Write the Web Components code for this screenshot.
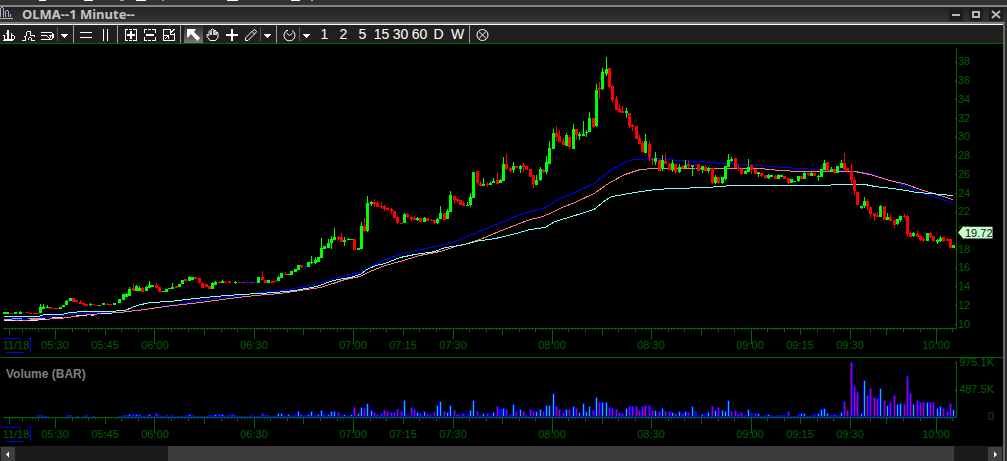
<!DOCTYPE html>
<html lang="en">
<head>
<meta charset="utf-8">
<title>OLMA--1 Minute--</title>
<style>
  html, body {
    height: 100%;
    margin: 0;
    background: #000;
  }
  body {
    --axis: #006400;
    --axis-text: #006000;
    font: 11px/14px "Liberation Sans", Arial, sans-serif;
    color: var(--axis-text);
  }
</style>
</head>
<body>
<chart-window>
  <title-bar slot="title">OLMA--1 Minute--</title-bar>
  <tool-bar slot="tools"></tool-bar>
  <price-pane></price-pane>
  <volume-pane>Volume (BAR)</volume-pane>
  <scroll-strip></scroll-strip>
</chart-window>

<script>
(function () {
  function define(name, html, setup) {
    const template = document.createElement('template');
    template.innerHTML = html;
    customElements.define(name, class extends HTMLElement {
      constructor() {
        super();
        this.attachShadow({ mode: 'open' });
        this.shadowRoot.appendChild(template.content.cloneNode(true));
        if (setup) setup(this.shadowRoot);
      }
    });
  }

  // ---------- window frame ----------

  define('chart-window', `
    <style>
      :host {
        display: flex;
        flex-direction: column;
        min-height: 100vh;
        background: #2b2b2b;
      }
      .strip {
        height: 5px;
        background: #333;
        border-bottom: 2px solid #858585;
      }
      .strip svg { display: block; }
      .frame {
        flex: 1;
        display: flex;
        flex-direction: column;
        margin-right: 2px;
        border-top: 2px solid #808080;
        border-right: 2px solid #686868;
        background: #000;
      }
    </style>
    <div class="strip">
      <svg width="320" height="2" shape-rendering="crispEdges" fill="#fff" aria-hidden="true">
        <path d="M39 0h7v1h-7zM84 0h9v1h-9zM136 0h10v1h-10zM227 0h11v1h-11zM291 0h9v1h-9z"/>
        <path fill="#c8a080" d="M120 0h4v1h-4zM162 0h2v1h-2zM311 0h2v1h-2z"/>
      </svg>
    </div>
    <slot name="title"></slot>
    <div class="frame">
      <slot name="tools"></slot>
      <slot></slot>
    </div>
  `);

  define('title-bar', `
    <style>
      :host {
        display: flex;
        align-items: center;
        height: 15px;
        padding-right: 4px;
        background: linear-gradient(#232323, #333);
        color: #c4c4c4;
        font: bold 13px/15px "Noto Sans", sans-serif;
      }
      .logo { width: 22px; height: 15px; }
      .name { flex: 1; white-space: nowrap; }
      .controls { display: flex; gap: 6px; }
      button {
        display: block;
        width: 14px;
        height: 13px;
        padding: 0;
        border: 0;
        border-radius: 2px;
        background: #1d1d1d;
      }
      button svg { display: block; }
    </style>
    <svg class="logo" viewBox="0 0 22 15" shape-rendering="crispEdges" fill="none" stroke="#aab4cc" aria-hidden="true">
      <path d="M0 11.5h13M.5 1v9M3.5 1v9M1 .5h2M5.5 4v6M8.5 4v6M6 3.5h2M10.5 7v3"/>
    </svg>
    <span class="name"><slot></slot></span>
    <div class="controls">
      <button aria-label="Minimize"><svg width="14" height="13" fill="#b8b8b8"><path d="M3 6h8v2H3z"/></svg></button>
      <button aria-label="Maximize"><svg width="14" height="13" fill="none" stroke="#b8b8b8" stroke-width="2"><path d="M4 4h6v5H4z"/></svg></button>
      <button aria-label="Close"><svg width="14" height="13" stroke="#b8b8b8" stroke-width="2"><path d="M3 3l8 7M11 3l-8 7"/></svg></button>
    </div>
  `);

  // ---------- toolbar ----------

  const ICONS = {
    bars: '<path d="M0 7.5h2M1.500 8v3M0 12.500h10M1 11.500h8M4.500 2v10M5.500 2v10M3 5.500h1M8.500 5v6M9 7.500h2M11.500 8v3M9 11.500h2"/>',
    steps: '<path d="M0 12.5h4M3.5 9v3M2 8.5h2M4.5 4v4M5 3.5h4M8.5 4v4M9 7.5h3M12.500 7v2M6.5 10v2M7 9.5h2M9.5 10v3M10 12.5h3"/>',
    study: '<path d="M0 4.5h11M0 7.5h6M0 11.5h7M6.500 8v1M7.500 9v1M8.500 10v1M8 7.500h3M11.500 5v6M12.500 6v4M7 11.500h4M9.500 8v2"/>',
    hlines: '<path d="M0 4.5h12M0 9.5h12"/>',
    vlines: '<path d="M4.5 1v12M8.5 1v12"/>',
    expand: '<path d="M4 1.5H1.5V12.5H4M9 1.5h3.5V12.5H9M5 1.5h3M5 12.5h3"/><path stroke-width="2" d="M3 7h8M7 3v8"/>',
    shrink: '<path d="M4 1.5H1.5V5M9 1.5h3.5V5M1.5 9v3.5H4M12.5 9v3.5H9M5 1.5h3M5 12.5h3"/><path stroke-width="2" d="M3 7h8"/>',
    fit: '<path d="M9 1.5H1.5V12.5H12.5V5M12.5 1l-4 4M8.5 2v4H12M3 11l3-3M2 7.5h4.5V11"/>',
    hand: '<path shape-rendering="auto" d="M4 12.5L1 8.5v-2l2 1V3.5l1-1 1 1V7V2l1.500-1L8 2v5V3l1-1 1 1v4V5l1-1 1 1v4.500L9.500 12.500z"/>',
    cross: '<path stroke-width="2" d="M1 7h12M7 1v12"/>',
    pencil: '<path shape-rendering="auto" d="M1.500 12.500V10L9 2.500l1.500-1 2 2-1 1.500L4 12.500zM8 3.500l2.500 2.500"/>',
    timer: '<path shape-rendering="auto" d="M4 2.500A5.500 5.500 0 1 0 9 2.500M6.500 7.500L3.500 5M6.500 7.500L9.500 5M3 2.500h2"/>',
    cancel: '<circle shape-rendering="auto" cx="6.500" cy="7" r="5.500"/><path shape-rendering="auto" d="M3 3.500l7 7M10 3.500l-7 7"/>'
  };

  const TOOLS = [
    'bars:Bar chart', 'steps:Line chart', 'study:Studies', '.', 'v:Chart menu', '|',
    'hlines:Horizontal grid', 'vlines:Vertical grid', '|',
    'expand:Expand', 'shrink:Compress', 'fit:Fit', '|',
    'arrow:Pointer', 'hand:Pan', 'cross:Crosshair', 'pencil:Draw', '.', 'v:Draw menu', '|',
    'timer:Interval', '.', 'v:Interval menu', ' ',
    '#1', '#2', '#5', '#15', '#30', '#60', '#D', '#W', '|', 'cancel:Clear'
  ];

  function toolHtml(tool) {
    if (tool === '|') return '<i class="rule"></i>';
    if (tool === '.') return '<i class="thin"></i>';
    if (tool === ' ') return '<i class="space"></i>';
    if (tool[0] === '#') return `<button class="period">${tool.slice(1)}</button>`;
    const [icon, label] = tool.split(':');
    if (icon === 'v') {
      return `<button class="menu" aria-label="${label}"><svg width="7" height="14"><path fill="#fff" d="M0 6h7v1H6v1H5v1H4v1H3V9H2V8H1V7H0z"/></svg></button>`;
    }
    if (icon === 'arrow') {
      return `<button class="on" aria-label="${label}"><svg width="13" height="14"><path fill="#fff" d="M0 1h9L7 4l6 6-2.500 3L4 6 1 9.500 0 9z"/></svg></button>`;
    }
    return `<button aria-label="${label}"><svg width="13" height="14" shape-rendering="crispEdges" fill="none" stroke="#fff">${ICONS[icon]}</svg></button>`;
  }

  define('tool-bar', `
    <style>
      :host {
        display: flex;
        height: 18px;
        border-top: 1px solid #fff;
        border-bottom: 1px solid var(--axis);
        background: #202020;
      }
      button {
        width: 19px;
        height: 18px;
        padding: 2px 0 0 3px;
        border: 0;
        background: none;
        color: #fff;
        text-align: left;
      }
      button svg { display: block; }
      .menu { width: 13px; }
      .on { background: linear-gradient(#2a2a2a, #777); }
      .period {
        display: flex;
        justify-content: center;
        padding: 0;
        font: 14px/18px "Liberation Sans Narrow", "Liberation Sans", sans-serif;
      }
      .rule { width: 1px; margin: 0 3px 0 2px; background: #a0a0a0; }
      .thin { width: 1px; margin: 2px 0; background: #555; }
      .space { width: 2px; }
    </style>
    ${TOOLS.map(toolHtml).join('')}
  `);

  // ---------- time axis, shared by both panes ----------

  const TIMES = [
    ['05:30', 55], ['05:45', 105], ['06:00', 155], ['06:30', 254], ['07:00', 353],
    ['07:15', 403], ['07:30', 453], ['08:00', 552], ['08:30', 651], ['09:00', 750],
    ['09:15', 800], ['09:30', 850], ['10:00', 936]
  ];

  function timeLabels() {
    let end = 32;
    let html = '<span class="day">11/18</span>';
    TIMES.forEach(([text, x]) => {
      html += `<i style="flex-grow:${x - 21 - end}"></i><span>${text}</span>`;
      end = x + 21;
    });
    return html;
  }

  function timeTicks() {
    let d = 'M3 .5H957M9.500 1v6';
    // the open at 09:30 falls on x = 850
    for (let m = -15; m <= 270; m++) {
      const x = m <= 240 ? Math.round(55 + m * 3.3125) : Math.round(850 + (m - 240) * 3.34);
      if (x > 953) break;
      let len = 1;
      if (m > -15 && m <= 240) {
        if (m % 5 === 0) len = 3;
        if (m % 15 === 0) len = 6;
        if (m % 30 === 0) len = 10;
        if (m > 0 && m % 60 === 30) len = 15;
      }
      d += `M${x + 0.5} 1v${len}`;
    }
    [[870, 3], [886, 6], [903, 3], [920, 3], [936, 15], [952, 3]].forEach(([x, len]) => {
      d += `M${x + 0.5} 1v${len}`;
    });
    return d;
  }

  define('time-axis', `
    <style>
      :host { display: grid; height: 29px; }
      svg, .labels { grid-area: 1 / 1; width: 100%; height: 29px; }
      svg { display: block; }
      .labels {
        display: flex;
        box-sizing: border-box;
        padding-top: 10px;
      }
      .labels > * { flex: 1 1 0; min-width: 0; }
      .labels span {
        flex-grow: 42;
        display: flex;
        justify-content: center;
        white-space: nowrap;
      }
      .labels .day { flex-grow: 32; }
    </style>
    <svg viewBox="0 0 957 29" preserveAspectRatio="none" shape-rendering="crispEdges" fill="none" aria-hidden="true">
      <path stroke="#006400" d="${timeTicks()}"/>
      <path stroke="#00f" d="M3 10.500H21M27 10.500H30.500V25M6 24.500H24"/>
    </svg>
    <div class="labels">${timeLabels()}</div>
  `);

  // ---------- price pane ----------

  // x, high, body top, body bottom, low; r falls, g rises, b is flat
  const CANDLES = `
    g 4 312 312 314 314,g 7 312 312 314 314,r 11 313 313 314 314,g 15 312 312 314 314,g 20 311 312 314 314,b 23 312 312 313 313,
    r 27 312 312 313 313,r 30 313 313 314 314,r 34 313 313 314 314,r 37 313 313 314 314,g 40 304 307 313 313,g 43 304 307 309 309,
    g 47 305 307 308 308,r 50 307 307 309 309,r 54 308 308 309 309,r 57 308 308 309 309,g 60 307 307 309 309,g 63 305 305 307 307,
    g 66 300 301 305 305,g 70 298 298 301 301,r 73 298 298 302 302,r 76 300 300 302 302,r 80 300 302 304 304,r 83 303 303 305 305,
    r 86 304 304 306 306,g 90 303 304 305 306,r 93 304 304 305 305,r 96 305 305 306 306,g 99 305 305 306 306,g 103 303 303 305 305,
    r 107 303 304 305 305,r 110 304 304 305 305,g 114 303 303 305 305,g 119 299 299 303 303,g 123 294 294 300 300,g 126 293 294 297 297,
    g 129 287 289 296 296,r 133 284 288 291 291,g 136 285 286 291 291,g 139 286 288 291 291,r 142 287 288 292 292,g 146 286 287 291 291,
    g 149 281 285 288 288,g 152 285 285 287 287,r 156 283 285 288 288,r 159 287 287 292 292,g 163 291 291 292 292,g 166 289 289 292 292,
    g 169 288 288 289 289,g 172 283 287 289 289,r 176 286 286 288 288,g 179 284 284 287 287,g 182 280 280 284 284,r 185 279 279 281 282,
    g 189 276 277 281 281,g 192 277 277 280 280,r 195 277 277 279 279,r 199 278 278 283 283,r 202 282 283 288 288,r 206 284 284 287 287,
    r 209 286 286 289 289,g 212 282 283 289 289,g 215 281 282 285 285,r 219 281 282 283 284,g 222 280 281 283 283,r 225 281 282 283 283,
    r 229 281 281 283 283,g 235 281 282 283 284,r 239 282 282 283 283,r 243 282 282 283 283,b 247 281 282 283 283,b 250 282 282 283 283,
    r 252 282 282 283 283,b 255 282 282 283 283,g 258 277 277 283 283,r 262 271 277 280 280,r 265 280 280 283 283,g 268 280 280 283 283,
    r 272 281 281 283 283,r 275 280 281 282 282,g 278 276 277 281 281,g 281 273 273 278 278,r 285 272 274 275 275,g 288 274 274 275 275,
    g 291 271 271 275 275,g 295 269 269 272 272,g 298 265 265 270 270,r 301 265 265 267 268,b 305 266 266 267 269,g 308 262 262 267 267,
    g 311 256 262 263 264,g 315 257 260 263 264,g 318 257 257 262 262,g 321 238 248 258 258,g 324 246 246 249 249,g 328 239 243 248 248,
    g 331 236 239 243 249,g 334 228 237 240 240,r 338 236 237 239 241,r 341 233 237 242 242,g 344 237 240 242 246,g 348 238 239 240 240,
    g 351 239 239 240 240,r 354 239 239 250 250,g 358 248 248 250 250,g 361 222 226 249 249,r 364 218 226 231 232,g 367 196 203 231 232,
    g 371 201 202 204 206,r 374 199 202 204 207,r 377 201 203 207 207,r 381 202 206 207 209,r 384 205 206 209 211,r 387 207 208 210 210,
    r 391 208 209 211 214,r 394 211 211 218 218,r 397 216 217 223 224,r 401 223 223 224 224,g 404 213 214 223 223,r 407 213 214 217 218,
    r 411 216 217 219 221,r 414 216 218 220 220,g 417 217 218 220 221,r 420 218 218 222 222,g 424 217 218 222 222,r 427 218 218 221 221,
    r 431 219 220 221 221,r 434 220 220 223 224,g 437 218 219 223 224,g 440 206 213 219 219,r 444 213 213 220 220,g 447 209 211 219 219,
    g 450 191 195 212 212,r 454 196 196 200 204,r 457 199 199 201 203,r 460 200 200 205 205,r 463 201 203 206 206,g 467 202 205 206 206,
    g 470 193 197 205 207,g 473 172 172 198 198,r 477 171 171 183 184,r 480 181 183 186 186,g 483 178 184 186 186,r 487 182 184 185 187,
    g 490 182 183 185 185,g 493 178 181 183 183,r 497 172 180 184 184,g 500 179 180 183 183,g 503 157 164 181 181,r 506 154 164 169 170,
    r 510 167 168 171 173,g 513 162 166 170 173,r 516 166 166 168 168,g 520 165 166 169 173,r 523 163 165 167 172,r 526 166 166 170 170,
    r 530 169 169 177 177,r 533 175 175 184 188,g 536 175 180 185 185,g 540 167 169 180 181,r 543 169 170 172 173,g 546 156 162 172 174,
    g 549 141 148 164 164,g 553 129 133 149 149,r 556 126 133 137 141,r 559 130 136 142 142,r 563 138 141 145 145,g 566 133 135 146 146,
    r 569 135 137 147 149,g 573 124 129 149 149,r 576 129 129 135 140,g 579 132 134 136 140,g 583 121 134 136 136,g 586 130 132 133 137,
    g 589 112 118 132 132,r 593 118 118 127 128,g 596 84 90 126 127,r 599 82 88 90 99,g 602 68 72 89 90,g 606 57 69 74 76,
    r 609 68 68 87 88,r 612 85 86 100 102,r 616 96 99 110 110,r 619 104 109 112 113,r 622 106 111 113 113,g 626 108 111 113 118,
    r 629 113 113 126 128,r 632 124 125 127 131,r 636 126 126 139 139,r 639 135 138 144 144,r 642 141 143 152 152,g 645 134 141 153 153,
    r 649 141 144 157 161,r 652 157 159 160 165,g 655 152 158 162 165,r 659 159 160 171 171,g 662 155 160 169 171,r 665 154 161 164 164,
    r 669 163 164 170 170,g 672 160 163 170 172,r 675 164 164 172 174,g 679 164 167 172 173,r 682 166 166 168 169,g 685 160 165 168 168,
    r 688 161 164 166 168,g 692 165 165 167 176,b 695 161 164 165 169,r 698 164 164 171 171,g 702 166 166 170 173,r 705 165 167 171 171,
    g 708 167 168 171 173,r 712 168 168 183 184,g 715 175 177 183 184,r 718 177 177 183 184,g 722 177 177 183 184,g 725 166 166 179 180,
    g 728 154 160 167 167,g 731 157 159 161 162,r 735 158 158 168 168,r 738 165 168 169 171,r 741 168 169 174 175,g 745 170 171 174 174,
    g 748 159 167 172 172,r 751 165 165 170 174,r 755 169 169 174 175,g 758 172 172 174 177,r 761 173 173 176 177,r 765 175 175 178 179,
    g 768 174 175 178 179,g 771 175 175 177 177,r 775 175 176 179 179,g 778 174 175 179 179,g 781 175 175 177 177,r 784 176 176 179 179,
    r 788 178 178 183 184,g 791 179 179 183 183,g 794 181 181 182 182,g 798 176 176 181 182,r 801 176 176 179 179,g 804 172 173 179 179,
    r 808 173 173 175 176,g 811 172 173 176 176,r 814 173 173 176 176,g 818 175 176 177 181,g 821 169 169 177 177,g 824 160 163 170 170,
    r 827 162 162 171 172,g 831 167 169 172 172,r 834 169 169 173 174,g 837 166 166 173 173,g 841 160 163 168 168,r 844 153 163 170 170,
    r 847 168 168 171 172,r 851 164 171 180 184,r 854 177 180 191 195,r 857 191 192 205 205,g 861 206 206 208 209,g 864 197 201 206 208,
    r 867 199 201 207 210,r 870 207 207 214 218,r 874 213 213 216 221,r 877 212 215 217 217,g 880 205 206 217 217,r 884 206 206 220 220,
    g 887 213 217 220 220,r 890 214 217 221 221,r 894 220 220 225 228,g 897 219 219 224 225,g 900 216 216 220 222,r 904 214 216 217 218,
    r 907 215 216 234 237,r 910 232 233 237 237,g 913 232 233 236 237,r 917 230 234 237 237,r 920 235 236 240 241,r 923 237 239 241 242,
    g 927 233 233 241 241,r 930 232 233 237 238,r 933 236 236 241 242,g 937 239 240 242 244,g 940 236 238 241 242,r 943 237 237 241 242,
    r 947 238 239 241 241,r 950 239 239 248 248,g 953 245 245 248 248`;

  const AVERAGES = [
    ['#00f', '4,319 20,319 45,317 60,315 80,313 100,312 120,312 150,308 170,305 190,302 215,298 240,295 260,292 270,291 290,289 310,285 325,281 345,275 360,272 372,266 385,259 400,254 420,249 440,245 455,241 470,235 484,229 504,221 520,214 545,207 560,198 575,192 594,183 604,175 610,170 623,163 633,159 655,158 680,160 700,161 720,163 750,164 770,166 800,168 830,170 850,170 870,173 890,180 905,185 920,192 940,198 953,203'],
    ['#fa8080', '4,320 20,320 40,319 60,318 90,314 120,312 145,309 165,306 200,302 230,298 255,295 280,293 300,290 320,287 333,283 345,279 360,276 370,271 385,265 400,261 420,255 440,251 447,249 455,246 468,243 480,239 504,229 530,219 540,217 550,213 562,207 575,202 594,193 610,182 625,174 640,169 655,168 720,168 760,168 780,170 800,171 855,171 870,174 890,180 907,184 920,189 940,195 953,199'],
    ['#80ffff', '4,316 38,316 45,314 62,314 70,312 85,311 108,311 125,310 137,305 150,302 170,301 195,298 215,296 240,294 260,293 275,292 295,290 317,286 333,280 350,277 360,274 367,269 376,265 385,263 400,257 415,254 435,251 445,247 460,245 472,242 480,240 490,239 500,237 516,233 530,229 545,227 555,221 575,215 594,209 605,200 612,196 635,192 655,189 674,188 707,187 733,185 823,185 840,184 865,184 875,186 900,189 917,192 930,193 953,195']
  ];

  const COLORS = { r: '#f00', g: '#0f0', b: '#00f' };

  function candleShapes() {
    return CANDLES.trim().split(/,\s*/).map((row) => {
      const [kind, ...values] = row.trim().split(' ');
      const [x, high, top, bottom, low] = values.map(Number);
      return `<path fill="${COLORS[kind]}" d="M${x} ${high}h1V${low}h-1zM${x - 1} ${top}h3V${bottom}h-3z"/>`;
    }).join('');
  }

  function averageLines() {
    return AVERAGES.map(([color, points]) =>
      `<polyline fill="none" stroke="${color}" transform="translate(0 .5)" points="${points}"/>`
    ).join('');
  }

  function priceTicks() {
    let d = '';
    for (let i = 0; i < 15; i++) d += `M955 ${Math.round(62 + i * 18.7) + 0.5}h2`;
    return d;
  }

  const PANE_STYLE = `
    :host {
      display: grid;
      grid-template-columns: 957fr 46fr;
      grid-template-rows: minmax(0, 1fr) 29px;
      min-height: 0;
    }
    .plot {
      grid-area: 1 / 1;
      display: block;
      width: 100%;
      height: 100%;
      min-height: 0;
    }
    time-axis { grid-area: 2 / 1; }
  `;

  const prices = [];
  for (let p = 38; p >= 10; p -= 2) prices.push(`<span>${p}</span>`);

  define('price-pane', `
    <style>
      ${PANE_STYLE}
      :host { flex: 313 1 0; }
      .scale {
        grid-area: 1 / 2 / 3 / 3;
        position: relative;
        display: flex;
        flex-direction: column;
        padding: 8px 0 24px 1px;
      }
      .scale span {
        flex: 1;
        display: flex;
        align-items: center;
        min-height: 0;
      }
      .last {
        position: absolute;
        left: 1px;
        top: 58%;
        padding-left: 7px;
        background: #c8ffc8;
        clip-path: polygon(0 50%, 6px 0, 6px 8%, 100% 8%, 100% 92%, 6px 92%, 6px 100%);
        color: #101030;
      }
    </style>
    <svg class="plot" viewBox="0 44 957 284" preserveAspectRatio="none" shape-rendering="crispEdges" role="img" aria-label="OLMA price">
      ${averageLines()}
      <path fill="none" stroke="#ffe0e0" stroke-dasharray="11 4 11 5" d="M4 320.500H22M28 320.500H38M39 319.500H46M52 317.500H65M76 315.500H94M101 313.500H113"/>
      <path fill="none" stroke="#a0a0ff" d="M4 319.500H12M12 318.500H22M28 318.500H45"/>
      ${candleShapes()}
      <path stroke="#006400" d="M956.500 48V328"/>
      <path stroke="#405040" d="${priceTicks()}"/>
    </svg>
    <time-axis></time-axis>
    <div class="scale">
      ${prices.join('')}
      <div class="last">19.72</div>
    </div>
  `);

  // ---------- volume pane ----------

  // x and height, in groups by the colour of the bar's core
  const VOLUME = {
    r: '133 3,139 3,156 4,219 3,232 3,262 4,301 3,338 5,354 10,364 9,374 5,377 3,381 4,384 7,387 6,391 5,394 5,397 8,401 6,411 10,414 8,420 4,427 4,430 3,434 5,444 6,454 7,457 3,463 4,477 6,487 4,497 11,506 8,516 6,523 6,530 8,533 6,543 6,556 11,559 8,563 5,569 8,576 9,593 7,599 15,609 10,612 9,616 8,619 5,622 4,629 11,632 11,636 11,639 7,642 11,645 12,649 12,652 7,659 6,665 6,669 6,675 4,682 4,688 5,712 11,718 10,731 6,735 7,738 3,741 5,755 4,788 6,834 3,844 16,847 7,851 55,854 31,857 25,867 22,870 29,874 20,877 19,884 17,890 15,894 22,904 13,907 41,910 24,917 17,920 15,923 15,930 15,933 15,943 9,947 6,950 14',
    g: '129 3,136 3,149 3,189 3,215 3,222 3,278 4,281 4,288 3,298 6,308 3,311 6,318 3,321 7,328 3,331 6,334 6,344 3,351 3,358 4,361 10,367 14,371 7,404 17,417 5,424 6,437 12,440 16,447 5,450 12,470 7,473 17,483 4,493 5,503 9,513 13,520 8,536 6,540 8,546 12,549 12,553 24,566 8,573 11,579 5,583 14,586 6,589 11,596 20,602 15,606 15,626 9,655 7,662 9,672 5,679 6,685 6,692 11,702 3,708 5,715 7,722 7,725 6,728 17,748 8,758 4,768 3,801 4,804 4,818 4,821 8,824 9,827 4,841 5,861 4,864 37,880 29,887 12,897 13,900 14,913 13,927 15,937 9,940 11,953 8',
    b: '38 2,41 2,44 1,47 1,67 2,70 2,77 1,83 1,86 2,93 1,119 1,123 2,126 2,142 1,146 2,152 1,159 2,162 1,166 2,172 2,179 1,182 1,186 2,192 2,196 1,205 1,209 2,212 2,226 2,229 2,235 2,252 2,258 1,265 2,268 2,285 2,291 2,295 3,305 2,315 2,324 3,341 2,348 2,407 3,460 3,467 3,480 2,490 3,500 8,510 3,526 2,695 6,698 2,705 3,745 2,751 4,761 1,765 2,771 2,778 2,781 2,784 2,798 3,811 2,814 3,831 2,837 2'
  };

  function volumeBars() {
    let html = '<path fill="#0000f8" d="M119 416h837v1H119z"/>';
    Object.keys(VOLUME).forEach((kind) => {
      VOLUME[kind].split(',').forEach((pair) => {
        const [x, h] = pair.split(' ').map(Number);
        html += `<path fill="#0000f8" d="M${x - 1} ${417 - h}h3v${h}h-3z"/>`;
        if (kind !== 'b') {
          html += `<path fill="${kind === 'r' ? '#e00020' : '#10d840'}" d="M${x} ${418 - h}h1v${h - 2}h-1z"/>`;
        }
      });
    });
    return html;
  }

  define('volume-pane', `
    <style>
      ${PANE_STYLE}
      :host {
        flex: 88 1 0;
        border-top: 1px solid var(--axis);
      }
      .name {
        grid-area: 1 / 1;
        padding: 9px 6px;
        color: #808080;
        font-weight: bold;
        font-size: 12px;
      }
      .scale {
        grid-area: 1 / 2;
        display: flex;
        flex-direction: column;
        justify-content: space-between;
        align-items: flex-end;
        margin: -3px 9px -6px 0;
      }
    </style>
    <svg class="plot" viewBox="0 358 957 59" preserveAspectRatio="none" shape-rendering="crispEdges" role="img" aria-label="OLMA volume">
      ${volumeBars()}
      <path stroke="#006400" d="M956.500 362V417"/>
      <path stroke="#405040" d="M955 362.500h3M955 390.500h3"/>
    </svg>
    <div class="name"><slot></slot></div>
    <div class="scale"><span>975.1K</span><span>487.5K</span><span>0</span></div>
    <time-axis></time-axis>
  `);

  // ---------- scrollbar ----------

  define('scroll-strip', `
    <style>
      :host {
        display: flex;
        height: 15px;
        padding: 0 1px;
        background: #1b1b1b;
      }
      button {
        width: 14px;
        height: 14px;
        margin-top: 1px;
        padding: 0;
        border: 0;
        background: #404040;
      }
      button svg { display: block; }
      .track { flex: 1; display: flex; }
      .before { flex: 153; }
      .thumb { flex: 786; background: #3c3c3c; }
      .after { flex: 34; }
    </style>
    <button aria-label="Scroll left"><svg width="14" height="14"><path fill="#fff" d="M5 7.500l3-3v6z"/></svg></button>
    <div class="track"><div class="before"></div><div class="thumb"></div><div class="after"></div></div>
    <button aria-label="Scroll right"><svg width="14" height="14"><path fill="#fff" d="M9 7.500l-3-3v6z"/></svg></button>
  `);
})();
</script>
</body>
</html>
